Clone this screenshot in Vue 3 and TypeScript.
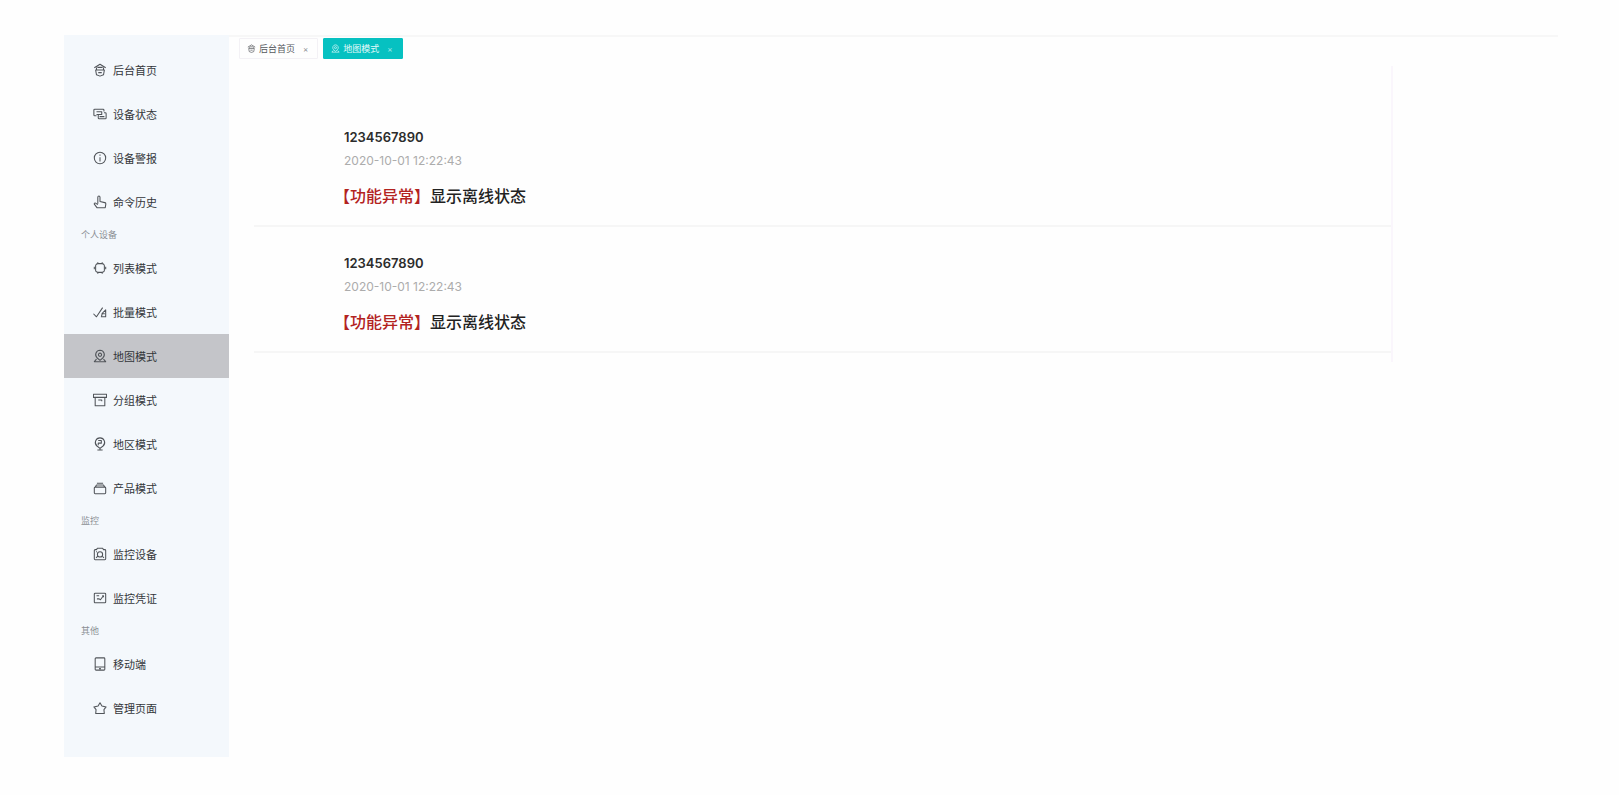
<script setup lang="ts">
import { ref } from 'vue'

interface MenuItem {
  label: string
  icon: string
}

interface MenuGroup {
  title?: string
  items: MenuItem[]
}

interface Alarm {
  id: number
  device: string
  time: string
  kind: string
  text: string
}

const icons: Record<string, string> = {
  home: 'M1.500 5.500 8 1.500l6.500 4M4 5v2.500M12 5v2.500M3 8h10l-1 5.500-4 1.500-4-1.500zM5 5h6M6 11h4',
  status: 'M2 2.500h9.500a1 1 0 0 1 1 1v1.500M2 2.500a1 1 0 0 0-1 1V9a1 1 0 0 0 1 1h2M4 5.500h6v3H4M6 8.500v4a1 1 0 0 0 1 1h7a1 1 0 0 0 1-1v-5a1 1 0 0 0-1-1h-1.500M7.500 11h5.500',
  alert: 'M8 1.500a6.500 6.500 0 1 1 0 13a6.500 6.500 0 1 1 0-13M8 4v1.500M8 7v5',
  hand: 'M5.500 10V2.500a1.250 1.250 0 0 1 2.500 0V7.500l5.500 1.200a1.500 1.500 0 0 1 1.200 1.500L14 14.500H4.500L1.500 10.500a1 1 0 0 1 1.500-1.200L5.500 11',
  chip: 'M5.500 3h5A2.500 2.500 0 0 1 13 5.500v5a2.500 2.500 0 0 1-2.500 2.500h-5A2.500 2.500 0 0 1 3 10.500v-5A2.500 2.500 0 0 1 5.500 3M1.500 6.500v3M14.500 6.500v3M5.500 1.500V3M10.500 1.500V3M5.500 13v1.500M10.500 13v1.500',
  batch: 'M.5 10l3.500 3.500L11 3M9 13.500h6M10 10l4.500-4.500v8M9.500 13.500l1-3.500h3',
  map: 'M8 1.500a5 5 0 0 1 3.500 8.500L8 13l-3.500-3A5 5 0 0 1 8 1.500M8 4.700a1.800 1.800 0 1 1 0 3.600a1.800 1.800 0 1 1 0-3.600M4 11.500l-2.500 3h13l-2.500-3',
  archive: 'M.5 1.500h15V5H.5zM2.500 5v9.500h11V5M6 8h4v1.500',
  region: 'M8 1a5.300 5.300 0 0 1 3.500 9.300L8 13l-3.500-2.700A5.300 5.300 0 0 1 8 1M6 4h3.500v3H6v2.500M5 14.800h6M8 13v1.500',
  product: 'M2.500 7h11a1 1 0 0 1 1 1v5.500a1 1 0 0 1-1 1h-11a1 1 0 0 1-1-1V8a1 1 0 0 1 1-1M2.500 7l1.500-2.500h8l1.500 2.500M4.500 2.500h7',
  camera: 'M1.500 4a1 1 0 0 1 1-1H4l1-1.500h6L12 3h1.500a1 1 0 0 1 1 1v9.500a1 1 0 0 1-1 1h-11a1 1 0 0 1-1-1zM8 5.500a3 3 0 1 1 0 6a3 3 0 1 1 0-6M3.500 5.500h1M3.500 12.500l2-2M12.500 12.500l-2-2',
  voucher: 'M2.500 2.500h11a1 1 0 0 1 1 1v9a1 1 0 0 1-1 1h-11a1 1 0 0 1-1-1v-9a1 1 0 0 1 1-1M4 5.500h3M4.500 9h2.500l1.500 1 3-4M10.500 5.500h1.500V7',
  phone: 'M3.500 1h9a1 1 0 0 1 1 1v12a1 1 0 0 1-1 1h-9a1 1 0 0 1-1-1V2a1 1 0 0 1 1-1M2.500 11.500h11M7 13.300h2',
  star: 'M8 2l2.200 3.700 4.800 1.100-2.500 3.100.4 4.300H3.100L3.500 9.900 1 6.800l4.800-1.100z',
}

const groups: MenuGroup[] = [
  {
    items: [
      { label: '后台首页', icon: 'home' },
      { label: '设备状态', icon: 'status' },
      { label: '设备警报', icon: 'alert' },
      { label: '命令历史', icon: 'hand' },
    ],
  },
  {
    title: '个人设备',
    items: [
      { label: '列表模式', icon: 'chip' },
      { label: '批量模式', icon: 'batch' },
      { label: '地图模式', icon: 'map' },
      { label: '分组模式', icon: 'archive' },
      { label: '地区模式', icon: 'region' },
      { label: '产品模式', icon: 'product' },
    ],
  },
  {
    title: '监控',
    items: [
      { label: '监控设备', icon: 'camera' },
      { label: '监控凭证', icon: 'voucher' },
    ],
  },
  {
    title: '其他',
    items: [
      { label: '移动端', icon: 'phone' },
      { label: '管理页面', icon: 'star' },
    ],
  },
]

const tabs: MenuItem[] = [
  { label: '后台首页', icon: 'home' },
  { label: '地图模式', icon: 'map' },
]

const current = ref('地图模式')

const alarms: Alarm[] = [
  { id: 1, device: '1234567890', time: '2020-10-01 12:22:43', kind: '【功能异常】', text: '显示离线状态' },
  { id: 2, device: '1234567890', time: '2020-10-01 12:22:43', kind: '【功能异常】', text: '显示离线状态' },
]
</script>

<template>
  <div class="page">
    <nav class="sidebar">
      <section v-for="(group, index) in groups" :key="index">
        <h2 v-if="group.title" class="group-title">{{ group.title }}</h2>
        <a
          v-for="item in group.items"
          :key="item.label"
          href="#"
          class="menu-item"
          :class="{ active: item.label === current }"
          @click.prevent="current = item.label"
        >
          <svg class="menu-icon" viewBox="0 0 16 16" aria-hidden="true"><path :d="icons[item.icon]" /></svg>
          <span>{{ item.label }}</span>
        </a>
      </section>
    </nav>

    <main class="content">
      <div class="tabs">
        <div v-for="tab in tabs" :key="tab.label" class="tab" :class="{ active: tab.label === current }">
          <button type="button" class="tab-name" @click="current = tab.label">
            <svg class="tab-icon" viewBox="0 0 16 16" aria-hidden="true"><path :d="icons[tab.icon]" /></svg>
            <span>{{ tab.label }}</span>
          </button>
          <button type="button" class="tab-close" :aria-label="tab.label">×</button>
        </div>
      </div>

      <div class="panel">
        <article v-for="alarm in alarms" :key="alarm.id" class="alarm">
          <h3 class="device">{{ alarm.device }}</h3>
          <time class="time">{{ alarm.time }}</time>
          <p class="message"><span class="kind">{{ alarm.kind }}</span>{{ alarm.text }}</p>
        </article>
      </div>
    </main>
  </div>
</template>

<style>
body {
  background: #fefefe;
}
</style>

<style scoped>
.page {
  display: flex;
  box-sizing: border-box;
  min-height: 100vh;
  padding: 35px 61px 38px 64px;
  font-family: Inter, "Noto Sans CJK SC", sans-serif;
}

.sidebar {
  flex: 0 0 165px;
  box-sizing: border-box;
  padding-top: 13px;
  background: #f4f8fc;
}

.group-title {
  margin: 0;
  padding-left: 17px;
  font-size: 9px;
  font-weight: 400;
  line-height: 22px;
  color: #8b8f94;
}

.menu-item {
  display: flex;
  align-items: center;
  gap: 6px;
  height: 44px;
  padding-left: 29px;
  font-size: 11px;
  color: #33363a;
  text-decoration: none;
}

.menu-item.active {
  background: #c4c5c9;
}

.menu-icon,
.tab-icon {
  width: 14px;
  height: 14px;
  fill: none;
  stroke: #505459;
  stroke-width: 1.2;
  stroke-linejoin: round;
}

.content {
  flex: 1;
  min-width: 0;
  border-top: 2px solid #f7f7f7;
}

.tabs {
  display: flex;
  gap: 5px;
  padding: 1px 10px 0;
}

.tab {
  display: flex;
  align-items: center;
  box-sizing: border-box;
  height: 21px;
  padding: 0 9px 0 7px;
  gap: 8px;
  border: 1px solid #f3f1f5;
  border-radius: 1px;
  color: #55585c;
}

.tab.active {
  border-color: #06c1c1;
  background: #06c1c1;
  color: #e0fafa;
}

.tab-name,
.tab-close {
  display: flex;
  align-items: center;
  padding: 0;
  border: 0;
  background: none;
  font: inherit;
  font-size: 9px;
  line-height: 16px;
  color: inherit;
}

.tab-name {
  gap: 3px;
}

.tab-close {
  font-size: 8px;
  opacity: 0.7;
}

.tab-icon {
  width: 9px;
  height: 9px;
  stroke: currentColor;
}

.panel {
  margin: 7px 165px 0 25px;
  padding: 35px 0 9px;
  border-right: 2px solid #faf6fc;
}

.alarm {
  box-sizing: border-box;
  height: 126px;
  padding: 26px 0 0 90px;
  border-bottom: 2px solid #f6f6f6;
}

.device {
  margin: 0;
  font-size: 13px;
  font-weight: 600;
  line-height: 20px;
  color: #2c2c2c;
}

.time {
  display: block;
  margin-top: 4px;
  font-size: 12px;
  line-height: 20px;
  color: #acacac;
}

.message {
  margin: 13px 0 0 -10px;
  font-size: 16px;
  font-weight: 500;
  line-height: 24px;
  color: #222;
}

.kind {
  color: #b3231f;
}
</style>
